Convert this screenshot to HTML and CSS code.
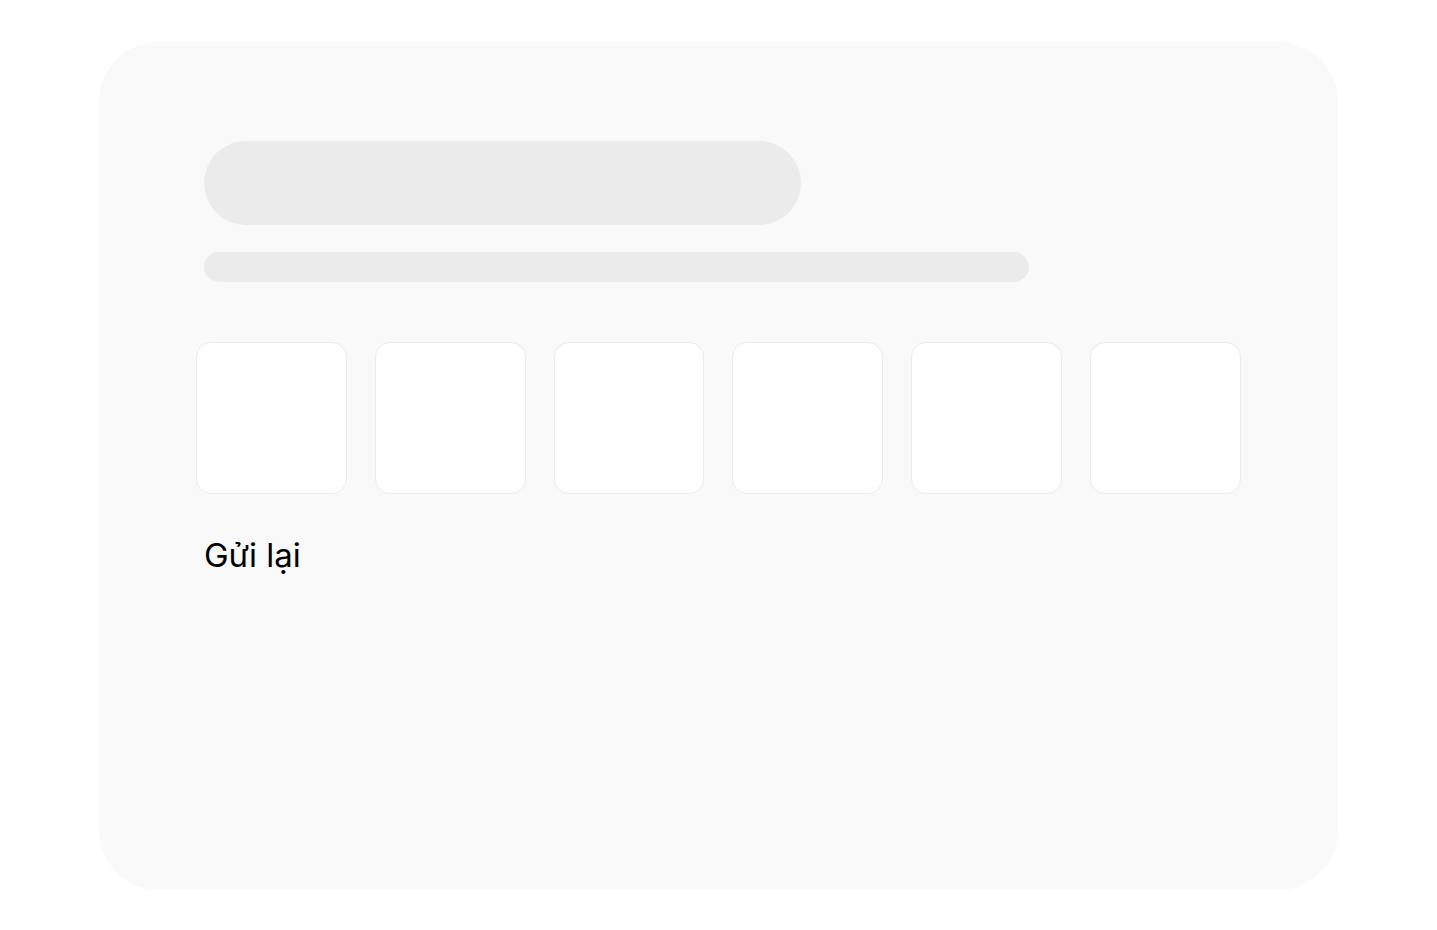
FILE: index.html
```html
<!DOCTYPE html>
<html lang="vi">
<head>
<meta charset="utf-8">
<title>OTP</title>
<link rel="stylesheet" href="styles.css">
</head>
<body>
<div class="page">
  <div class="card">
    <div class="sk sk-title"></div>
    <div class="sk sk-line"></div>
    <div class="otp">
      <div class="cell"></div>
      <div class="cell"></div>
      <div class="cell"></div>
      <div class="cell"></div>
      <div class="cell"></div>
      <div class="cell"></div>
    </div>
    <div class="resend">Gửi lại</div>
  </div>
</div>
</body>
</html>
```

FILE: styles.css
```css
html, body {
  margin: 0;
  padding: 0;
  background: #ffffff;
}
.page {
  width: 1437px;
  height: 930px;
  box-sizing: border-box;
  padding: 42px 99px 40px 99px;
}
.card {
  height: 848px;
  box-sizing: border-box;
  background: #f9f9f9;
  border-radius: 60px;
  padding: 99px 105px 0 105px;
  display: flex;
  flex-direction: column;
  align-items: flex-start;
}
.sk {
  background: #ebebeb;
}
.sk-title {
  width: 597px;
  height: 84px;
  border-radius: 42px;
}
.sk-line {
  margin-top: 27px;
  width: 825px;
  height: 30px;
  border-radius: 15px;
}
.otp {
  margin: 60px -8px 0 -8px;
  align-self: stretch;
  display: grid;
  grid-template-columns: repeat(6, 1fr);
  gap: 28px;
}
.cell {
  height: 152px;
  box-sizing: border-box;
  background: #ffffff;
  border: 1.5px solid #ebebeb;
  border-radius: 15px;
}
.resend {
  margin-top: 41px;
  font-family: Inter, "Noto Sans", sans-serif;
  font-size: 33px;
  line-height: 40px;
  color: #000000;
}
```
